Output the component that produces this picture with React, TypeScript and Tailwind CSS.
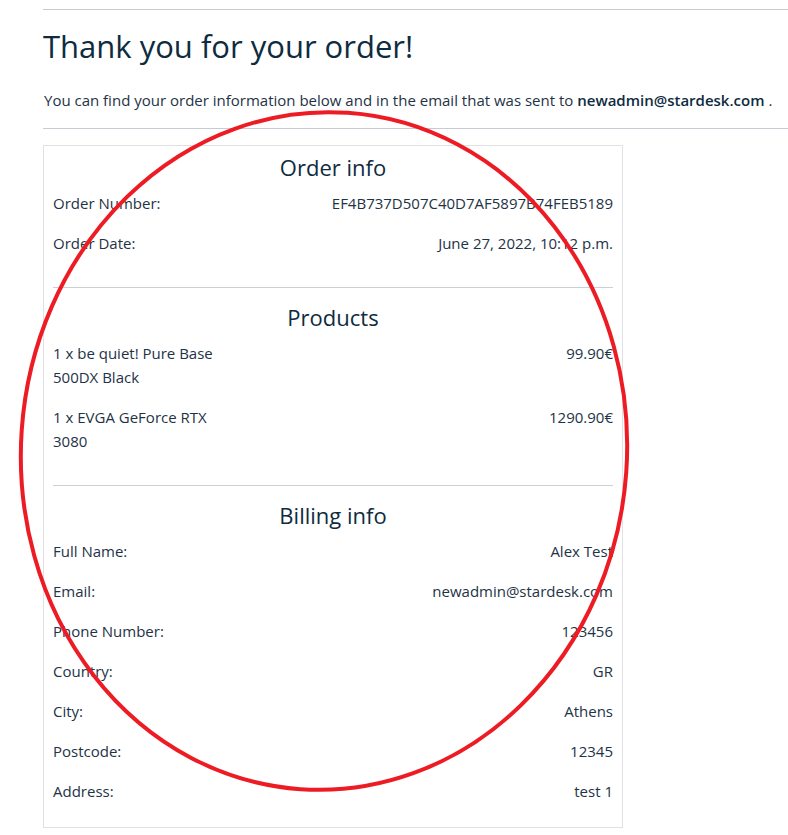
import React from 'react';

const orderInfo = [
  { label: 'Order Number:', value: 'EF4B737D507C40D7AF5897B74FEB5189' },
  { label: 'Order Date:', value: 'June 27, 2022, 10:12 p.m.' },
];

const products = [
  { name: '1 x be quiet! Pure Base 500DX Black', price: '99.90€' },
  { name: '1 x EVGA GeForce RTX 3080', price: '1290.90€' },
];

const billing = [
  { label: 'Full Name:', value: 'Alex Test' },
  { label: 'Email:', value: 'newadmin@stardesk.com' },
  { label: 'Phone Number:', value: '123456' },
  { label: 'Country:', value: 'GR' },
  { label: 'City:', value: 'Athens' },
  { label: 'Postcode:', value: '12345' },
  { label: 'Address:', value: 'test 1' },
];

function SectionTitle({ children }: { children: React.ReactNode }) {
  return <h3 className="text-center text-[22px] leading-[26px] text-[#0e2b40] mb-[11px]">{children}</h3>;
}

function Row({ label, value }: { label: string; value: string }) {
  return (
    <div className="flex justify-between leading-6 mb-4">
      <span>{label}</span>
      <span>{value}</span>
    </div>
  );
}

export default function App() {
  return (
    <div
      className="relative min-h-[835px] bg-white text-[#1e3346] text-[15px]"
      style={{ fontFamily: '"Open Sans", "Noto Sans", sans-serif' }}
    >
      <div className="pl-[43px] pt-[9px]">
        <hr className="border-t border-[#c5ccd3]" />
        <h1 className="text-[31px] leading-[36px] text-[#0e2b40] mt-[18px]">Thank you for your order!</h1>
        <p className="mt-6 leading-6 pl-px">
          You can find your order information below and in the email that was sent to{' '}
          <b className="font-semibold text-[#0e2b40]">newadmin@stardesk.com</b> .
        </p>
        <hr className="border-t border-[#c5ccd3] mt-4" />

        {/* Order card */}
        <div className="w-[580px] mt-4 border border-[#dfe1e4] px-[9px] pt-2 pb-2">
          <SectionTitle>Order info</SectionTitle>
          {orderInfo.map((r) => (
            <Row key={r.label} {...r} />
          ))}
          <hr className="border-t border-[#c9d0d6] mt-8 mb-4" />

          <SectionTitle>Products</SectionTitle>
          {products.map((p) => (
            <div key={p.name} className="flex justify-between leading-6 mb-4">
              <span className="w-[187px]">{p.name}</span>
              <span>{p.price}</span>
            </div>
          ))}
          <hr className="border-t border-[#c9d0d6] mt-8 mb-4" />

          <SectionTitle>Billing info</SectionTitle>
          {billing.map((r) => (
            <Row key={r.label} {...r} />
          ))}
        </div>
      </div>

      {/* red annotation circle */}
      <svg className="absolute left-0 top-0 pointer-events-none" width="788" height="835">
        <ellipse
          cx="324"
          cy="451"
          rx="303"
          ry="339"
          transform="rotate(4 324 451)"
          fill="none"
          stroke="#ed1c24"
          strokeWidth="4"
        />
      </svg>
    </div>
  );
}
